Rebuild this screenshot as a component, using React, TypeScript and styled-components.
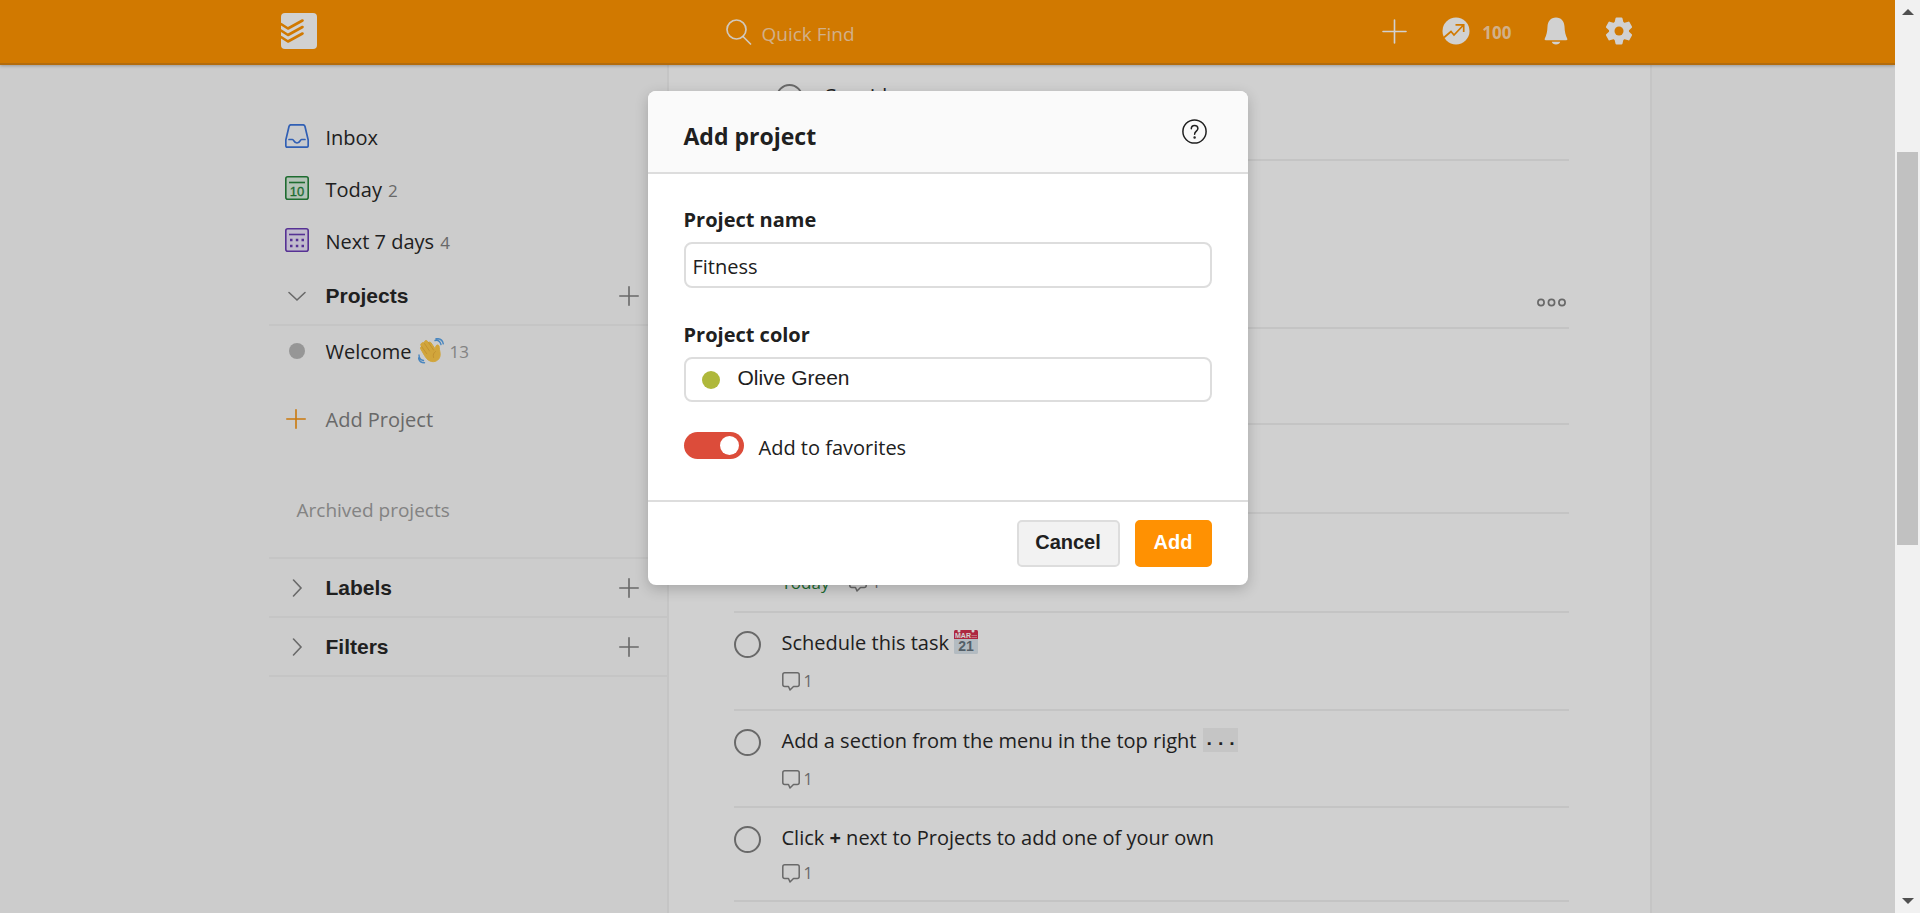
import React from 'react';
import styled, { createGlobalStyle } from 'styled-components';

const ui = '"Open Sans", sans-serif';
const arial = '"Liberation Sans", sans-serif';

const GlobalStyle = createGlobalStyle`
  * { box-sizing: border-box; }
  body { margin: 0; font-family: ${ui}; font-size: 20px; color: #282828; }
  button, input, select { font: inherit; color: inherit; }
  button { padding: 0; border: 0; background: none; display: flex; align-items: center; cursor: pointer; }
  a { color: inherit; text-decoration: none; }
  ul { list-style: none; margin: 0; padding: 0; }
  h1, h2, p { margin: 0; }
  svg { display: block; flex: none; }
`;

const Shell = styled.div`
  display: flex;
  height: 100vh;
  overflow: hidden;
`;

const Page = styled.div`
  position: relative;
  flex: 1;
  min-width: 0;
  overflow: hidden;
  display: flex;
  flex-direction: column;
  background: #f9f9f9;
`;

const TopBar = styled.header`
  position: relative;
  flex: none;
  height: 65px;
  background: #ff9400;
  border-bottom: 2px solid #db8410;
  box-shadow: 0 1px 3px rgba(0, 0, 0, 0.25);
`;

const TopInner = styled.div`
  display: flex;
  align-items: center;
  max-width: 1408px;
  height: 62px;
  margin: 0 auto;
  padding: 0 19px 0 37px;
`;

const Search = styled.label`
  display: flex;
  align-items: center;
  gap: 10px;
  margin-left: 409px;
  padding-top: 2px;
  flex: 1;
`;

const SearchInput = styled.input`
  width: 200px;
  height: 32px;
  padding: 4px 0 0;
  border: 0;
  outline: 0;
  background: none;
  font-size: 19px;
  &::placeholder { color: #ffd7a8; opacity: 1; }
`;

const TopActions = styled.nav`
  display: flex;
  align-items: center;
  color: #fff;
`;

const Karma = styled.button`
  gap: 12px;
  margin: 0 32px 0 35px;
  font-size: 17px;
  font-weight: 700;
`;

const KarmaCount = styled.span`
  padding-top: 2px;
  color: #ffd7a8;
`;

const GearButton = styled.button`
  margin-left: 37px;
`;

const Columns = styled.div`
  display: flex;
  flex: 1;
  width: 100%;
  max-width: 1408px;
  margin: 0 auto;
  min-height: 0;
`;

const Sidebar = styled.aside`
  flex: none;
  width: 423px;
  padding: 46px 0 0 25px;
`;

const NavLink = styled.a`
  display: flex;
  align-items: center;
  gap: 17px;
  height: 52px;
  padding-left: 16px;

  svg { margin-bottom: 2px; }
`;

const Count = styled.span<{ $light?: boolean }>`
  margin-left: 6px;
  font-size: 17px;
  color: ${(p) => (p.$light ? '#a0a0a0' : '#808080')};
`;

const GroupHead = styled.div`
  display: flex;
  align-items: center;
  height: 59px;
  padding: 0 28px 0 16px;
  border-bottom: 2px solid #f1f1f1;
`;

const GroupToggle = styled.button`
  flex: 1;
  gap: 17px;
  font-family: ${arial};
  font-size: 21px;
  font-weight: 700;
`;

const ProjectLink = styled.a`
  display: flex;
  align-items: center;
  height: 50px;
  padding-left: 20px;
`;

const Dot = styled.span`
  width: 16px;
  height: 16px;
  margin-right: 21px;
  border-radius: 50%;
  background: #b8b8b8;
`;

const ProjectName = styled.span`
  margin-right: 6px;
`;

const AddProject = styled.button`
  gap: 20px;
  height: 54px;
  margin: 16px 0 0 17px;
  color: #808080;
`;

const Archived = styled.a`
  display: block;
  padding: 50px 0 33px 28px;
  font-size: 19px;
  line-height: 28px;
  color: #a0a0a0;
  border-bottom: 2px solid #f1f1f1;
`;

const Content = styled.main`
  flex: 1;
  min-width: 0;
  padding: 1px 81px 0 65px;
  background: #fefefe;
  border-left: 2px solid #f1f1f1;
  border-right: 2px solid #f1f1f1;
`;

const Task = styled.li<{ $height: number; $indent?: boolean }>`
  display: flex;
  gap: 21px;
  height: ${(p) => p.$height}px;
  padding-top: 18px;
  padding-left: ${(p) => (p.$indent ? 42 : 0)}px;
  border-bottom: 2px solid #efefef;
`;

const Check = styled.input`
  appearance: none;
  flex: none;
  width: 27px;
  height: 27px;
  margin: 0;
  border: 2px solid #808080;
  border-radius: 50%;
`;

const TaskText = styled.div`
  flex: 1;
`;

const TaskTitle = styled.label`
  display: flex;
  align-items: center;
  gap: 5px;
  height: 22px;
  white-space: pre;
`;

const Code = styled.code`
  margin-left: 2px;
  font: 700 19px/24px "Liberation Mono", monospace;
  background: #f1f1f1;
`;

const Meta = styled.div<{ $tight?: boolean }>`
  display: flex;
  align-items: center;
  gap: 4px;
  height: 20px;
  margin-top: ${(p) => (p.$tight ? 15 : 18)}px;
  font-size: 16px;
  color: #808080;
`;

const Due = styled.span`
  margin-right: 16px;
  font-size: 17px;
  color: #25843b;
`;

const SectionHead = styled.div`
  display: flex;
  align-items: flex-end;
  justify-content: flex-end;
  height: 168px;
  padding: 0 3px 20px;
  border-bottom: 2px solid #efefef;
`;

const Overlay = styled.div`
  position: absolute;
  inset: 0;
  display: flex;
  justify-content: center;
  align-items: flex-start;
  padding-top: 91px;
  background: rgba(0, 0, 0, 0.18);
`;

const Dialog = styled.form`
  width: 600px;
  border-radius: 8px;
  overflow: hidden;
  background: #fff;
  color: #202020;
  box-shadow: 0 4px 14px rgba(0, 0, 0, 0.2);
`;

const DialogHead = styled.div`
  display: flex;
  justify-content: space-between;
  align-items: center;
  height: 83px;
  padding: 0 41px 0 36px;
  background: #fafafa;
  border-bottom: 2px solid #ddd;
`;

const DialogTitle = styled.h1`
  padding-top: 8px;
  font-size: 23px;
  line-height: 32px;
`;

const DialogBody = styled.div`
  display: flex;
  flex-direction: column;
  padding: 32px 36px 41px;
`;

const FieldLabel = styled.label`
  font-size: 20px;
  line-height: 28px;
  font-weight: 700;
  margin-bottom: 8px;
`;

const NameInput = styled.input`
  height: 46px;
  margin-bottom: 33px;
  padding: 2px 7px 0;
  border: 2px solid #ddd;
  border-radius: 8px;
  outline: 0;
`;

const ColorField = styled.div`
  display: flex;
  align-items: center;
  height: 45px;
  padding-left: 16px;
  border: 2px solid #ddd;
  border-radius: 8px;
`;

const ColorDot = styled.span`
  width: 18px;
  height: 18px;
  border-radius: 50%;
  background: #afb83b;
`;

const ColorSelect = styled.select`
  appearance: none;
  flex: 1;
  height: 36px;
  margin-left: 18px;
  padding: 0 0 4px;
  border: 0;
  outline: 0;
  background: none;
  font-family: ${arial};
  font-size: 21px;
`;

const Favorite = styled.label`
  display: flex;
  align-items: center;
  gap: 15px;
  height: 27px;
  margin-top: 30px;
`;

const FavoriteText = styled.span`
  padding-top: 4px;
`;

const Toggle = styled.input`
  appearance: none;
  display: flex;
  justify-content: flex-end;
  align-items: center;
  width: 60px;
  height: 27px;
  margin: 0;
  padding-right: 5px;
  border-radius: 14px;
  background: #dc4c3a;
  &::before {
    content: '';
    width: 19px;
    height: 19px;
    border-radius: 50%;
    background: #fff;
  }
`;

const DialogFoot = styled.div`
  display: flex;
  justify-content: flex-end;
  gap: 15px;
  padding: 18px 36px;
  border-top: 2px solid #ddd;
`;

const Action = styled.button<{ $primary?: boolean }>`
  justify-content: center;
  width: ${(p) => (p.$primary ? 77 : 103)}px;
  height: 47px;
  padding-bottom: 3px;
  border: 2px solid ${(p) => (p.$primary ? '#ff9102' : '#ddd')};
  border-radius: 5px;
  background: ${(p) => (p.$primary ? '#ff9102' : '#f2f2f2')};
  color: ${(p) => (p.$primary ? '#fff' : '#202020')};
  font-family: ${arial};
  font-weight: 700;
`;

const ScrollTrack = styled.div`
  display: flex;
  flex-direction: column;
  align-items: center;
  width: 25px;
  padding: 9px 0;
  background: #f1f1f1;
`;

const ScrollThumb = styled.div`
  width: 21px;
  height: 43vh;
  margin: 137px 0 auto;
  background: #c1c1c1;
`;

const Logo = () => (
  <svg width="36" height="36" viewBox="0 0 36 36">
    <rect width="36" height="36" rx="4" fill="#fff" />
    <path d="M0 11l7 4.500 14.500-8M0 17.500l7 4.500 14.500-8M0 24l7 4.500 14.500-8" fill="none" stroke="#ff9400" strokeWidth="2.600" strokeLinejoin="round" strokeLinecap="round" />
  </svg>
);

const SearchIcon = () => (
  <svg width="26" height="26" viewBox="0 0 26 26" fill="none" stroke="#fff" strokeOpacity=".9" strokeWidth="1.700">
    <circle cx="10.5" cy="10.5" r="9.500" />
    <path d="M17 17.500l7.500 7.500" strokeLinecap="round" />
  </svg>
);

const Plus = ({ size, color, width = 1.6 }: { size: number; color: string; width?: number }) => (
  <svg width={size} height={size} viewBox="0 0 20 20" stroke={color} strokeWidth={width} strokeLinecap="round">
    <path d="M10 .8v18.4M.8 10h18.4" />
  </svg>
);

const KarmaIcon = () => (
  <svg width="28" height="28" viewBox="0 0 28 28">
    <circle cx="14" cy="14" r="13.5" fill="#fff" />
    <path d="M2 20.500L9 14.500l3 3.500L21.500 8M13.500 7.800H21.700V15" fill="none" stroke="#ff9400" strokeWidth="1.7" />
  </svg>
);

const BellIcon = () => (
  <svg width="24" height="28" viewBox="0 0 24 28" fill="#fff">
    <path d="M12 .5C6.500.5 3.700 4.500 3.500 9.500C3.300 15 2.500 18 .8 21.500C.3 22.600.8 23.200 1.700 23.200H22.300C23.200 23.200 23.700 22.600 23.200 21.500C21.500 18 20.700 15 20.500 9.500C20.300 4.500 17.500.5 12 .5ZM7.800 24.700H16.200C15.700 26.500 14.200 27.500 12 27.500S8.300 26.500 7.800 24.700Z" />
  </svg>
);

const GearIcon = () => (
  <svg width="28" height="28" viewBox="0 0 28 28">
    <g fill="#fff" stroke="#fff" strokeLinejoin="round" strokeWidth="2">
      {[0, 60, 120].map((a) => (
        <path key={a} d="M11.500 1.500H16.500L18 8V20L16.500 26.500H11.500L10 20V8Z" transform={`rotate(${a} 14 14)`} />
      ))}
      <circle cx="14" cy="14" r="9" />
    </g>
    <circle cx="14" cy="14" r="4.500" fill="#ff9400" />
  </svg>
);

const InboxIcon = () => (
  <svg width="24" height="24" viewBox="0 0 24 24" fill="#f6f8fc" stroke="#3b74dc" strokeWidth="1.700" strokeLinejoin="round">
    <path d="M6 .8H18Q19.600.8 20 2.500L23.200 16V21.500Q23.200 23.200 21.500 23.200H2.500Q.8 23.200.8 21.500V16L4 2.500Q4.400.8 6 .8Z" />
    <path d="M4 15.500H7.500C9 15.500 8.500 19 12 19S15 15.500 16.500 15.500H20" fill="none" strokeLinecap="round" />
  </svg>
);

const TodayIcon = () => (
  <svg width="24" height="24" viewBox="0 0 24 24" fill="#dceee0" stroke="#25843b" strokeWidth="1.6">
    <rect x=".8" y=".8" width="22.400" height="22.400" rx="2" />
    <path d="M4 6.500H20" strokeWidth="1.600" />
    <text x="12" y="20" textAnchor="middle" fontFamily="Liberation Sans, sans-serif" fontSize="13" fill="#25843b" stroke="#25843b" strokeWidth=".3">10</text>
  </svg>
);

const WeekIcon = () => (
  <svg width="24" height="24" viewBox="0 0 24 24" fill="#ece4fa" stroke="#6a3cb5" strokeWidth="1.6">
    <rect x=".8" y=".8" width="22.400" height="22.400" rx="2" />
    <path d="M4 6.500H20" strokeWidth="1.600" />
    <path d="M5 12H7.500M10.800 12H13.300M16.500 12H19M5 18H7.500M10.800 18H13.300M16.500 18H19" strokeWidth="2.500" />
  </svg>
);

const Chevron = ({ open }: { open?: boolean }) => (
  <svg width="24" height="24" viewBox="0 0 24 24" fill="none" stroke="#808080" strokeWidth="1.600" strokeLinecap="round">
    <path d={open ? 'M4 8.500L12 16L20 8.500' : 'M8.500 4L16 12L8.500 20'} />
  </svg>
);

const WaveIcon = () => (
  <svg width="26" height="26" viewBox="0 0 26 26">
    <path d="M4 5c1-1 2-.5 2.700.5L6.500 3.500c.8-1.300 2.200-1.200 3-.2l1 1.300c.8-.8 2-.6 2.700.4l4.300 6.500c.2-1.600 0-3.500 1.200-4.300 1.300-.7 2.500.2 2.500 2 0 3 1.500 5.500.8 9-.8 4-5.500 6.800-10 4.800-2.500-1-4-3-5.500-5.500L2.800 11c-.7-1.200 0-2.200.7-2.400L3 7.500C2.500 6.500 3 5.500 4 5z" fill="#ffca48" stroke="#ffca48" strokeWidth="1" />
    <path d="M6.500 5.500l5 7.500M10.500 4.500l5 7.500M3.700 8.700l5 7M15.500 19.500c-.8-3 .2-4.500 2-6" fill="none" stroke="#e8ac3a" strokeWidth=".8" strokeLinecap="round" />
    <path d="M17 2.500c3-.7 5 .7 6 4M18 .8c4-.6 6.500 1.200 7.300 5M1 17c0 3 1.500 5 4.500 5.500M.5 20c.6 3 2.500 4.800 6 4.800" fill="none" stroke="#5aa4ea" strokeWidth="1.400" strokeLinecap="round" />
  </svg>
);

const CalendarIcon = () => (
  <svg width="24" height="24" viewBox="0 0 24 24" fontFamily="Liberation Sans, sans-serif" fontWeight="700">
    <rect width="24" height="24" rx="1.500" fill="#dbe4ec" />
    <path d="M0 1.500Q0 0 1.500 0H22.500Q24 0 24 1.500V9H0Z" fill="#d5304f" />
    <circle cx="5" cy="1" r="1.500" fill="#fff" />
    <circle cx="19" cy="1" r="1.500" fill="#fff" />
    <path d="M17.500 5.500H23M17.500 7.500H23" stroke="#f0a0ae" strokeWidth=".8" />
    <text x="1" y="8" fontSize="7" fill="#fff">MAR</text>
    <text x="12" y="21" fontSize="14" textAnchor="middle" fill="#66757f">21</text>
  </svg>
);

const CommentIcon = () => (
  <svg width="18" height="19" viewBox="0 0 18 19" fill="none" stroke="#808080" strokeWidth="1.500" strokeLinejoin="round">
    <path d="M2.800.8H15.200Q17.200.8 17.200 2.800V12.500Q17.200 14.500 15.200 14.500H11.500L8 18L6.500 14.500H2.800Q.8 14.500.8 12.500V2.800Q.8.8 2.800.8Z" />
  </svg>
);

const MoreIcon = () => (
  <svg width="29" height="9" viewBox="0 0 29 9" fill="none" stroke="#808080" strokeWidth="1.700">
    <circle cx="4" cy="4.500" r="3.100" />
    <circle cx="14.500" cy="4.500" r="3.100" />
    <circle cx="25" cy="4.500" r="3.100" />
  </svg>
);

const HelpIcon = () => (
  <svg width="25" height="25" viewBox="0 0 25 25" fill="none" stroke="#202020" strokeWidth="1.500" strokeLinecap="round">
    <circle cx="12.500" cy="12.500" r="11.600" />
    <path d="M9.300 9.700C9.300 5.200 15.900 5.400 15.900 9.500C15.900 12 12.600 12.300 12.600 15.300" />
    <circle cx="12.600" cy="18.600" r=".5" fill="#202020" />
  </svg>
);

const Arrow = ({ down }: { down?: boolean }) => (
  <svg width="12" height="6" viewBox="0 0 12 6" fill="#505050">
    <path d={down ? 'M0 0H12L6 6Z' : 'M0 6H12L6 0Z'} />
  </svg>
);

type TaskProps = {
  id: string;
  height: number;
  indent?: boolean;
  tight?: boolean;
  due?: string;
  comments?: number;
  children?: React.ReactNode;
};

const TaskRow = ({ id, height, indent, tight, due, comments, children }: TaskProps) => (
  <Task $height={height} $indent={indent}>
    <Check type="checkbox" id={id} aria-label="Complete task" />
    <TaskText>
      <TaskTitle htmlFor={id}>{children}</TaskTitle>
      {comments && (
        <Meta $tight={tight}>
          {due && <Due>{due}</Due>}
          <CommentIcon />
          {comments}
        </Meta>
      )}
    </TaskText>
  </Task>
);

const Group = ({ name, open }: { name: string; open?: boolean }) => (
  <GroupHead>
    <GroupToggle type="button" aria-expanded={!!open}>
      <Chevron open={open} />
      {name}
    </GroupToggle>
    <button type="button" aria-label={`Add to ${name}`}>
      <Plus size={20} color="#808080" />
    </button>
  </GroupHead>
);

export default function App() {
  return (
    <Shell>
      <GlobalStyle />
      <Page>
        <TopBar>
          <TopInner>
            <a href="#home" aria-label="Home"><Logo /></a>
            <Search>
              <SearchIcon />
              <SearchInput placeholder="Quick Find" aria-label="Quick Find" />
            </Search>
            <TopActions>
              <button type="button" aria-label="Quick add"><Plus size={25} color="#fff" width={1.3} /></button>
              <Karma type="button"><KarmaIcon /><KarmaCount>100</KarmaCount></Karma>
              <button type="button" aria-label="Notifications"><BellIcon /></button>
              <GearButton type="button" aria-label="Settings"><GearIcon /></GearButton>
            </TopActions>
          </TopInner>
        </TopBar>
        <Columns>
          <Sidebar>
            <ul>
              <li><NavLink href="#inbox"><InboxIcon />Inbox</NavLink></li>
              <li><NavLink href="#today"><TodayIcon /><span>Today<Count>2</Count></span></NavLink></li>
              <li><NavLink href="#week"><WeekIcon /><span>Next 7 days<Count>4</Count></span></NavLink></li>
            </ul>
            <Group name="Projects" open />
            <ProjectLink href="#welcome">
              <Dot />
              <ProjectName>Welcome</ProjectName>
              <WaveIcon />
              <Count $light>13</Count>
            </ProjectLink>
            <AddProject type="button"><Plus size={20} color="#f79410" />Add Project</AddProject>
            <Archived href="#archived">Archived projects</Archived>
            <Group name="Labels" />
            <Group name="Filters" />
          </Sidebar>
          <Content>
            <ul>
              <TaskRow id="t0" height={95} indent>Consider</TaskRow>
            </ul>
            <SectionHead>
              <button type="button" aria-label="More actions"><MoreIcon /></button>
            </SectionHead>
            <ul>
              <TaskRow id="t1" height={96} />
              <TaskRow id="t2" height={89} />
              <TaskRow id="t3" height={99} due="Today" comments={1} />
              <TaskRow id="t4" height={98} comments={1}>Schedule this task<CalendarIcon /></TaskRow>
              <TaskRow id="t5" height={97} comments={1}>Add a section from the menu in the top right<Code>...</Code></TaskRow>
              <TaskRow id="t6" height={94} comments={1} tight><span>Click <b>+</b> next to Projects to add one of your own</span></TaskRow>
            </ul>
          </Content>
        </Columns>
        <Overlay>
          <Dialog role="dialog" aria-label="Add project">
            <DialogHead>
              <DialogTitle>Add project</DialogTitle>
              <button type="button" aria-label="Help"><HelpIcon /></button>
            </DialogHead>
            <DialogBody>
              <FieldLabel htmlFor="name">Project name</FieldLabel>
              <NameInput id="name" defaultValue="Fitness" />
              <FieldLabel htmlFor="color">Project color</FieldLabel>
              <ColorField>
                <ColorDot />
                <ColorSelect id="color"><option>Olive Green</option></ColorSelect>
              </ColorField>
              <Favorite>
                <Toggle type="checkbox" role="switch" defaultChecked />
                <FavoriteText>Add to favorites</FavoriteText>
              </Favorite>
            </DialogBody>
            <DialogFoot>
              <Action type="button">Cancel</Action>
              <Action type="button" $primary>Add</Action>
            </DialogFoot>
          </Dialog>
        </Overlay>
      </Page>
      <ScrollTrack>
        <Arrow />
        <ScrollThumb />
        <Arrow down />
      </ScrollTrack>
    </Shell>
  );
}
